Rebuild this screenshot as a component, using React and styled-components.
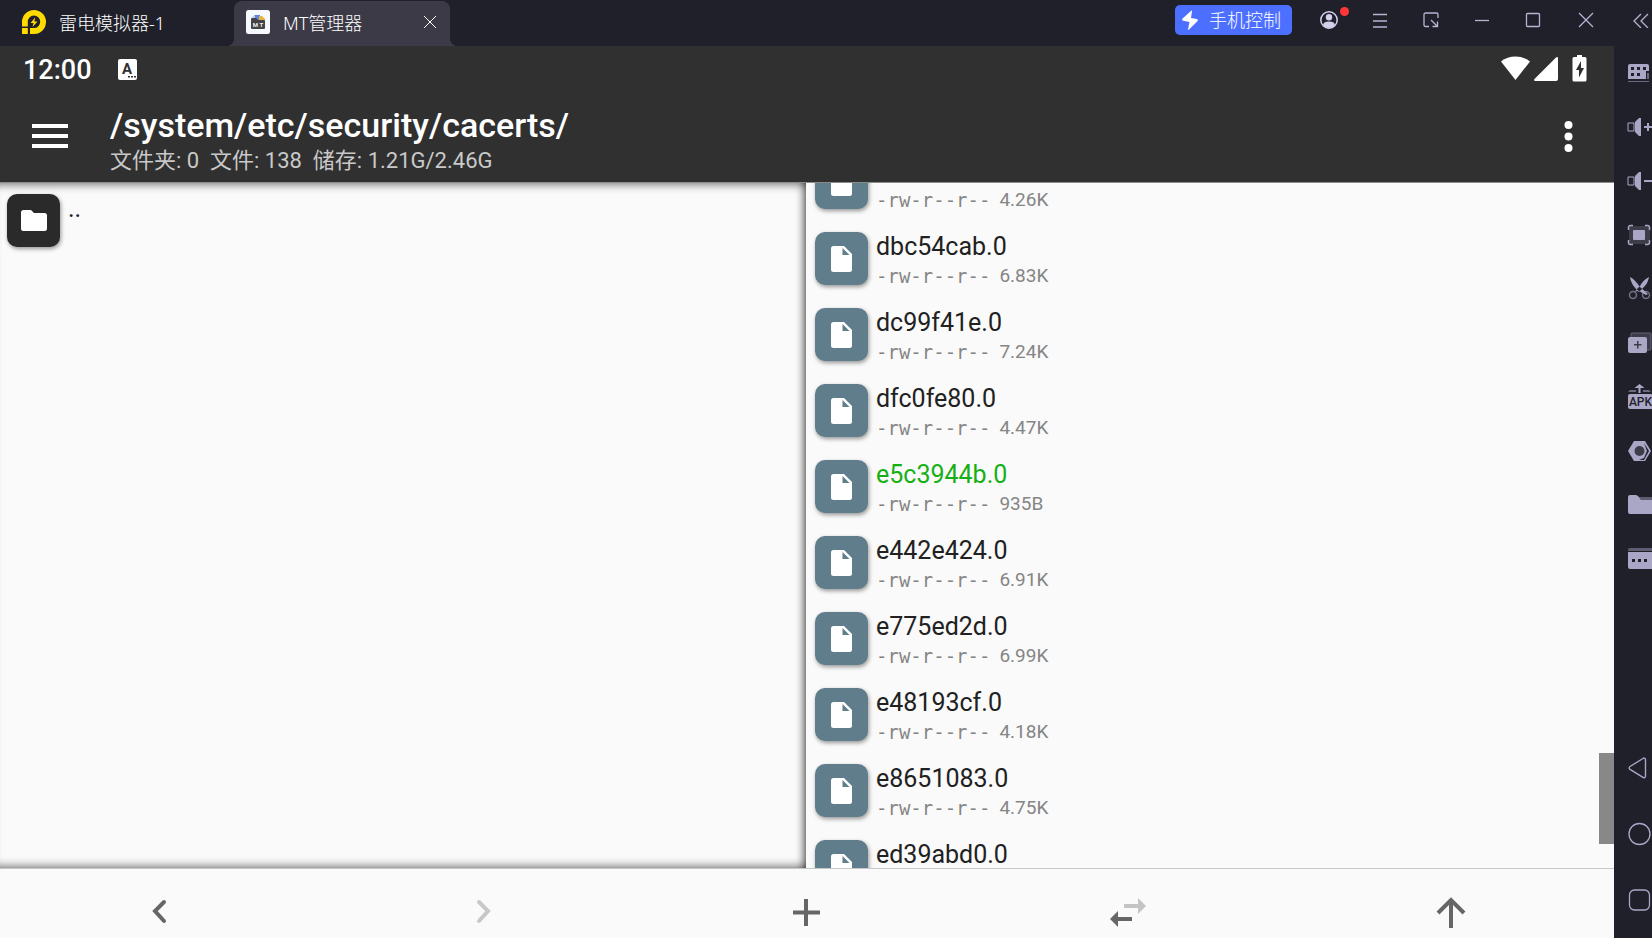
import React from "react";
import styled, { createGlobalStyle } from "styled-components";

const GlobalStyle = createGlobalStyle`
  * { box-sizing: border-box; }
  body { margin: 0; background: #fafafa; }
  button { border: 0; padding: 0; background: none; color: inherit; font: inherit; cursor: pointer; }
  h1, p, ul { margin: 0; padding: 0; }
  ul { list-style: none; }
  svg { display: block; flex: none; }
`;

const sans = `Roboto, "Noto Sans CJK SC", sans-serif`;
const uiSans = `"Noto Sans", "Noto Sans CJK SC", sans-serif`;

const Emulator = styled.div`
  display: flex;
  flex-direction: column;
  height: 100vh;
  overflow: hidden;
  font-family: ${sans};
`;

const TitleBar = styled.header`
  display: flex;
  flex: none;
  height: 46px;
  background: #20202a;
  color: #ffffff;
  font-family: ${uiSans};
  font-size: 18px;
  font-weight: 300;
  line-height: 24px;
`;

const InstanceTab = styled.div`
  display: flex;
  align-items: center;
  gap: 13px;
  width: 234px;
  padding: 0 0 2px 22px;
`;

const AppTab = styled.div`
  position: relative;
  display: flex;
  align-items: center;
  gap: 13px;
  width: 216px;
  margin-top: 1px;
  padding: 0 13px 3px 12px;
  border-radius: 8px 8px 0 0;
  background: #3c3a46;

  &::before,
  &::after {
    content: "";
    position: absolute;
    bottom: 0;
    width: 8px;
    height: 8px;
  }
  &::before {
    right: 100%;
    background: radial-gradient(circle at 0 0, transparent 8px, #3c3a46 8px);
  }
  &::after {
    left: 100%;
    background: radial-gradient(circle at 100% 0, transparent 8px, #3c3a46 8px);
  }
`;

const TabLabel = styled.span`
  flex: 1;
  padding-top: 2px;
  white-space: nowrap;
`;

const PhoneControl = styled.button`
  display: flex;
  align-items: center;
  gap: 11px;
  height: 30px;
  margin: 5px 11px 0 auto;
  padding: 0 11px 0 7px;
  border-radius: 5px;
  background: #4d6fff;
  white-space: nowrap;
`;

const WindowButton = styled.button`
  position: relative;
  display: grid;
  place-items: center;
  width: ${(p) => p.$width || 51}px;
  height: 40px;
  color: #b7b3d4;
`;

const Badge = styled.span`
  position: absolute;
  top: 7px;
  right: 5px;
  width: 9px;
  height: 9px;
  border-radius: 50%;
  background: #ff3638;
`;

const RailSlot = styled.div`
  width: 38px;
  overflow: hidden;
`;

const Body = styled.div`
  display: flex;
  flex: 1;
  min-height: 0;
`;

const Screen = styled.main`
  display: flex;
  flex: 1;
  flex-direction: column;
  min-width: 0;
  background: #fafafa;
`;

const StatusBar = styled.div`
  display: flex;
  align-items: center;
  height: 44px;
  padding: 2px 27px 0 23px;
  background: #303030;
  color: #ffffff;
`;

const Clock = styled.time`
  margin-right: 26px;
  padding-top: 2px;
  font-size: 27px;
  font-weight: 500;
  line-height: 32px;
`;

const StatusIcons = styled.div`
  display: flex;
  align-items: center;
  margin-left: auto;
`;

const AppBar = styled.div`
  display: flex;
  align-items: center;
  height: 93px;
  padding: 0 27px 0 32px;
  border-bottom: 1px solid #8c8c8c;
  background: #303030;
  color: #ffffff;
`;

const Heading = styled.div`
  flex: 1;
  min-width: 0;
  padding: 10px 0 0 42px;
  white-space: nowrap;
`;

const Path = styled.h1`
  font-size: 34px;
  font-weight: 500;
  line-height: 40px;
`;

const Summary = styled.p`
  color: #c9c9c9;
  font-size: 22px;
  line-height: 32px;
  white-space: pre;
`;

const Panes = styled.div`
  display: flex;
  flex: 1;
  min-height: 0;
`;

const Pane = styled.section`
  position: relative;
  flex: ${(p) => (p.$sunken ? "0 0 calc(50% - 1px)" : "1")};
  min-width: 0;
  overflow: hidden;
  box-shadow: ${(p) =>
    p.$sunken
      ? `inset 0 10px 8px -8px rgba(0,0,0,.5), inset -10px 0 8px -8px rgba(0,0,0,.7), inset 0 -10px 8px -8px rgba(0,0,0,.5)`
      : "none"};
`;

const FileList = styled.ul`
  margin-top: ${(p) => (p.$scrolled ? -38 : 0)}px;
  padding-left: ${(p) => (p.$scrolled ? 9 : 7)}px;
`;

const FileRow = styled.li`
  display: flex;
  gap: 8px;
  height: 76px;
  padding-top: 11px;
`;

const FileTile = styled.span`
  display: grid;
  flex: none;
  place-items: center;
  width: 53px;
  height: 53px;
  border-radius: 10px;
  background: ${(p) => (p.$folder ? "#2a2a2a" : "#607d8b")};
  box-shadow: 1px 2px 4px rgba(0, 0, 0, 0.4);
`;

const FileName = styled.div`
  height: 30px;
  color: ${(p) => (p.$fresh ? "#16b016" : "#212121")};
  font-size: 25px;
  line-height: 30px;
`;

const FileMeta = styled.div`
  display: flex;
  gap: 9px;
  color: #858585;
  font-size: 19px;
  line-height: 28px;
`;

const Mode = styled.span`
  font-family: "DejaVu Sans Mono", monospace;
`;

const ScrollThumb = styled.div`
  position: absolute;
  right: 0;
  bottom: 24px;
  width: 15px;
  height: 91px;
  background: #888888;
`;

const Toolbar = styled.nav`
  display: flex;
  flex: none;
  height: 70px;
  padding: 18px 2px 0 0;
  border-top: 1px solid #c8c8c8;
  color: #666666;
`;

const ToolButton = styled.button`
  display: flex;
  flex: 1;
  justify-content: center;
  color: ${(p) => (p.disabled ? "#c8c8c8" : "#666666")};
`;

const Rail = styled.aside`
  display: flex;
  flex-direction: column;
  justify-content: space-between;
  width: 38px;
  padding-bottom: 5px;
  overflow: hidden;
  background: #20202a;
`;

const RailButton = styled.button`
  display: grid;
  place-items: center;
  width: 51px;
  height: ${(p) => (p.$nav ? 66 : 54)}px;
  color: #aaa7c6;
`;

const LdLogo = () => (
  <svg width="24" height="24" viewBox="0 0 24 24" fill="#ffdb00" aria-hidden="true">
    <path fillRule="evenodd" d="M12 0a12 12 0 1 1 0 24H8v-6h4a6.200 6.200 0 1 0-6.200-6v4.600H0V12A12 12 0 0 1 12 0z" />
    <path d="M0 18h5.800v6H0zM13.200 7.500 8.500 13h3l-1 4 5-5.600h-3.100z" />
  </svg>
);

const MtLogo = () => (
  <svg width="24" height="24" viewBox="0 0 24 24" aria-hidden="true">
    <rect width="24" height="24" rx="2.500" fill="#f8f8ff" />
    <path d="M8 5h6v5H8z" fill="#5b84ec" />
    <path d="M6 7l3-2v4H6z" fill="#c3cde5" />
    <path d="M13 6h3l3 3v2h-6z" fill="#eab43a" />
    <path d="M6 8h4l2 2h6a1 1 0 0 1 1 1v7a1 1 0 0 1-1 1H6a1 1 0 0 1-1-1V9a1 1 0 0 1 1-1z" fill="#444446" />
    <text x="12" y="16.500" fontFamily="Roboto, sans-serif" fontSize="6" fontWeight="700" textAnchor="middle" fill="#f2f2f2">M T</text>
  </svg>
);

const stroke = { fill: "none", stroke: "currentColor", strokeWidth: 1.3 };

const Glyph = ({ name }) => {
  switch (name) {
    case "close-tab":
      return <svg width="14" height="14" viewBox="0 0 14 14" {...stroke} strokeWidth="1"><path d="M1 1l12 12M13 1 1 13" /></svg>;
    case "bolt":
      return <svg width="16" height="20" viewBox="0 0 16 20" fill="#fff"><path d="M9.500.5 .6 8.600c-.8.8-.5 2 .6 2.200l6.300 1.200-1.500 7.500c0 .5.4.6.7.3l8.700-8.600c.8-.8.5-1.900-.6-2.200L9 8l1-7c0-.6-.2-.7-.5-.5z" /></svg>;
    case "user":
      return <svg width="18" height="18" viewBox="0 0 18 18"><circle cx="9" cy="9" r="8.200" fill="none" stroke="#d3d0ec" strokeWidth="1.500" /><circle cx="9" cy="6.200" r="3.200" fill="#d3d0ec" /><path d="M3 14c.3-2.600 2.600-3.600 6-3.600s5.700 1 6 3.600c-1.500 2-3.600 3-6 3s-4.500-1-6-3z" fill="#d3d0ec" /></svg>;
    case "menu":
      return <svg width="16" height="16" viewBox="0 0 16 16" {...stroke}><path d="M1 2.500h14M1 9h14M1 15h14" /></svg>;
    case "resize":
      return <svg width="16" height="16" viewBox="0 0 16 16" {...stroke}><path d="M6 14.500H2.500a1.500 1.500 0 0 1-1.500-1.500V2.500A1.500 1.500 0 0 1 2.500 1h11A1.500 1.500 0 0 1 15 2.500V6M8 8l6.500 6.500M9.500 14.500h5v-5" /></svg>;
    case "minimize":
      return <svg width="16" height="16" viewBox="0 0 16 16" {...stroke}><path d="M1 8.500h14" /></svg>;
    case "maximize":
      return <svg width="16" height="16" viewBox="0 0 16 16" {...stroke}><rect x="1.500" y="1.500" width="13" height="13" rx="1" /></svg>;
    case "close":
      return <svg width="16" height="16" viewBox="0 0 16 16" {...stroke}><path d="M1 1l14 14M15 1 1 15" /></svg>;
    case "collapse":
      return <svg width="16" height="16" viewBox="0 0 16 16" {...stroke}><path d="M8 2 1 9l7 7M15 2 8 9l7 7" /></svg>;
    default:
      return null;
  }
};

const RailGlyph = ({ name }) => {
  const art = {
    keyboard: (
      <>
        <path fillRule="evenodd" d="M3 3h17a2 2 0 0 1 2 2v5h-3v8H1V5a2 2 0 0 1 2-2zM4 6v3h3V6zm6 0v3h3V6zm6 0v3h3V6zM4 12v3h3v-3zm6 0v3h3v-3z" />
        <path d="M20 12h2v6h-2zM1 20h21v1H1z" opacity=".55" />
      </>
    ),
    volumeUp: (
      <>
        <path d="M1 8h6v8H1z" fill="none" stroke="currentColor" />
        <path d="M8 7l4-4h2v18h-2l-4-4zM20 8h2v3h3v2h-3v3h-2v-3h-3v-2h3z" />
      </>
    ),
    volumeDown: (
      <>
        <path d="M1 8h6v8H1z" fill="none" stroke="currentColor" />
        <path d="M8 7l4-4h2v18h-2l-4-4zM17 11h8v2h-8z" />
      </>
    ),
    fullscreen: (
      <>
        <rect x="2" y="3" width="21" height="18" rx="2" fill="#3d3c49" />
        <path d="M6 2.500H3.500a2 2 0 0 0-2 2V7M18 2.500h2.500a2 2 0 0 1 2 2V7M1.500 17v2.500a2 2 0 0 0 2 2H6M18 21.500h2.500a2 2 0 0 0 2-2V17" fill="none" stroke="currentColor" strokeWidth="1.500" />
        <rect x="6" y="7" width="12" height="10" rx="1" />
      </>
    ),
    scissors: (
      <>
        <path d="M3 0c4 2 7 6 10 10l8 7-2 1-7-4C7 11 4 6 3 0zM22 0c-4 2-7 5-9 9l-4 4 3 2 3-3c3-3 6-6 7-12z" />
        <g fill="none" stroke="currentColor" strokeWidth="1.500" opacity=".6">
          <circle cx="6" cy="18" r="3.500" />
          <circle cx="19" cy="18" r="3.500" />
          <path d="M8 15l2-2M17 15l-2-2" />
        </g>
      </>
    ),
    multi: (
      <>
        <rect x="4" y="2" width="20" height="17" rx="1" fill="#3d3c49" stroke="#65637a" />
        <path fillRule="evenodd" d="M3 6h15a2 2 0 0 1 2 2v12a2 2 0 0 1-2 2H3a2 2 0 0 1-2-2V8a2 2 0 0 1 2-2zm7 4v3H7v1.500h3v3h1.500v-3h3V13h-3v-3z" />
      </>
    ),
    apk: (
      <>
        <path d="M12.500-1l5 4h-4v5h-2V3h-4z" />
        <path d="M3 5h6v2H1zM16 5h6l2 2h-8z" opacity=".55" />
        <rect x="1" y="9" width="25" height="15" rx="2" />
        <text x="13.500" y="21" fontFamily="Roboto, sans-serif" fontSize="12" fontWeight="500" textAnchor="middle" fill="#20202a">APK</text>
      </>
    ),
    hex: (
      <>
        <path d="M7 2h11l6 10-6 10H7L1 12z" />
        <path d="M17 4l3 8-3 7-5 2h5l5-9z" fill="#20202a" />
        <circle cx="12.500" cy="12" r="5" fill="#3d3c49" />
      </>
    ),
    folder: (
      <>
        <path d="M11 4h15v3H14z" opacity=".45" />
        <path d="M3 2h6l2 1 3 4h12v14H3a2 2 0 0 1-2-2V4a2 2 0 0 1 2-2z" />
      </>
    ),
    more: (
      <>
        <path d="M3 1h23v3H1V3a2 2 0 0 1 2-2z" opacity=".45" />
        <path fillRule="evenodd" d="M1 5h25v17H3a2 2 0 0 1-2-2zm4 7v3h3v-3zm6 0v3h3v-3zm6 0v3h3v-3z" />
      </>
    ),
    back: <path d="M16 2.500 3 10.500a1.600 1.600 0 0 0 0 2.800l13 8a1.500 1.500 0 0 0 2.500-1.300V3.800A1.500 1.500 0 0 0 16 2.500z" fill="none" stroke="currentColor" strokeWidth="1.400" />,
    home: <circle cx="12.500" cy="12" r="10.500" fill="none" stroke="currentColor" strokeWidth="1.300" />,
    recent: <rect x="2.500" y="2" width="20" height="20" rx="5" fill="none" stroke="currentColor" strokeWidth="1.300" />,
  };
  return (
    <svg width="25" height="24" viewBox="0 0 25 24" fill="currentColor" overflow="visible">
      {art[name]}
    </svg>
  );
};

const ToolGlyph = ({ name }) => {
  const line = { fill: "none", stroke: "currentColor", strokeWidth: 4 };
  const art = {
    back: <path d="M27 15 18 24l9 10" {...line} strokeLinecap="round" />,
    forward: <path d="M19 15l9 9-9 10" {...line} strokeLinecap="round" />,
    add: <path d="M24 12v27M11 25.500h27" {...line} />,
    swap: (
      <>
        <path d="M14 24 6 32l8 8v-6h14v-4H14z" />
        <path d="M42 19l-8-8v6H20v4h14v6z" fill="#c4c4c4" />
      </>
    ),
    up: <path d="M24 41V13M11 26l13-13 13 13" {...line} />,
  };
  return (
    <svg width="48" height="48" viewBox="0 0 48 48" fill="currentColor">
      {art[name]}
    </svg>
  );
};

const FileGlyph = () => (
  <svg width="21" height="26" viewBox="0 0 21 26" fill="#fff">
    <path fillRule="evenodd" d="M2.500 0H13l8 8v15.500a2.500 2.500 0 0 1-2.500 2.500h-16A2.500 2.500 0 0 1 0 23.500v-21A2.500 2.500 0 0 1 2.500 0zM11.500 2v7h7z" />
  </svg>
);

const FolderGlyph = () => (
  <svg width="26" height="22" viewBox="0 0 26 22" fill="#fff">
    <path d="M2.500 0H10l3 3h10.500A2.500 2.500 0 0 1 26 5.500v13a2.500 2.500 0 0 1-2.500 2.500h-21A2.500 2.500 0 0 1 0 18.500v-16A2.500 2.500 0 0 1 2.500 0z" />
  </svg>
);

const files = [
  { name: "", size: "4.26K" },
  { name: "dbc54cab.0", size: "6.83K" },
  { name: "dc99f41e.0", size: "7.24K" },
  { name: "dfc0fe80.0", size: "4.47K" },
  { name: "e5c3944b.0", size: "935B", fresh: true },
  { name: "e442e424.0", size: "6.91K" },
  { name: "e775ed2d.0", size: "6.99K" },
  { name: "e48193cf.0", size: "4.18K" },
  { name: "e8651083.0", size: "4.75K" },
  { name: "ed39abd0.0", size: "" },
];

const railTools = [
  ["keyboard", "键盘"],
  ["volumeUp", "音量加"],
  ["volumeDown", "音量减"],
  ["fullscreen", "全屏"],
  ["scissors", "截图"],
  ["multi", "多开"],
  ["apk", "安装APK"],
  ["hex", "设置"],
  ["folder", "共享文件夹"],
  ["more", "更多"],
];

const railNav = [
  ["back", "返回"],
  ["home", "主页"],
  ["recent", "最近任务"],
];

const windowButtons = [
  ["menu", "菜单"],
  ["resize", "缩放"],
  ["minimize", "最小化"],
  ["maximize", "最大化"],
];

export default function App() {
  return (
    <Emulator>
      <GlobalStyle />
      <TitleBar>
        <InstanceTab>
          <LdLogo />
          <TabLabel>雷电模拟器-1</TabLabel>
        </InstanceTab>
        <AppTab>
          <MtLogo />
          <TabLabel>MT管理器</TabLabel>
          <button type="button" aria-label="关闭标签">
            <Glyph name="close-tab" />
          </button>
        </AppTab>
        <PhoneControl type="button">
          <Glyph name="bolt" />
          手机控制
        </PhoneControl>
        <WindowButton type="button" aria-label="账户">
          <Glyph name="user" />
          <Badge />
        </WindowButton>
        {windowButtons.map(([name, label]) => (
          <WindowButton key={name} type="button" aria-label={label}>
            <Glyph name={name} />
          </WindowButton>
        ))}
        <WindowButton type="button" aria-label="关闭" $width={56}>
          <Glyph name="close" />
        </WindowButton>
        <RailSlot>
          <WindowButton type="button" aria-label="收起" $width={53}>
            <Glyph name="collapse" />
          </WindowButton>
        </RailSlot>
      </TitleBar>

      <Body>
        <Screen>
          <StatusBar>
            <Clock>12:00</Clock>
            <svg width="19" height="21" viewBox="0 0 19 21" aria-hidden="true">
              <rect width="19" height="21" rx="2" fill="#fff" />
              <text x="9" y="15" fontFamily="Roboto, sans-serif" fontSize="15" fontWeight="700" textAnchor="middle" fill="#303030">A</text>
              <path d="M10 17h2v1.500h-2zM13 17h2v1.500h-2zM16 17h2v1.500h-2z" fill="#303030" />
            </svg>
            <StatusIcons>
              <svg width="86" height="28" viewBox="0 1 86 28" fill="#fff" aria-hidden="true">
                <path d="M0 7.500C8 .7 21 .7 29 7.500L14.500 26z" />
                <path d="M57 4.500V25a2 2 0 0 1-2 2H34.500c-1.500 0-2-1-1-2L55 3.500c1-1 2-.5 2 1z" />
                <path fillRule="evenodd" d="M76 1h5v2h3a1.500 1.500 0 0 1 1.500 1.500V26a1.500 1.500 0 0 1-1.500 1.500H73a1.500 1.500 0 0 1-1.500-1.500V4.500A1.500 1.500 0 0 1 73 3h3zM80 7l-5 9h3v7.500l5-9.500h-3z" />
              </svg>
            </StatusIcons>
          </StatusBar>

          <AppBar>
            <button type="button" aria-label="打开菜单">
              <svg width="36" height="26" viewBox="0 0 36 26" fill="#fff">
                <path d="M0 1h36v4H0zM0 11h36v4H0zM0 21h36v4H0z" />
              </svg>
            </button>
            <Heading>
              <Path>/system/etc/security/cacerts/</Path>
              <Summary>{"文件夹: 0  文件: 138  储存: 1.21G/2.46G"}</Summary>
            </Heading>
            <button type="button" aria-label="更多选项">
              <svg width="37" height="34" viewBox="0 0 37 34" fill="#fff">
                <circle cx="18.500" cy="6" r="4" />
                <circle cx="18.500" cy="17.500" r="4" />
                <circle cx="18.500" cy="29" r="4" />
              </svg>
            </button>
          </AppBar>

          <Panes>
            <Pane $sunken>
              <FileList>
                <FileRow>
                  <FileTile $folder>
                    <FolderGlyph />
                  </FileTile>
                  <FileName>..</FileName>
                </FileRow>
              </FileList>
            </Pane>
            <Pane>
              <FileList $scrolled>
                {files.map((file) => (
                  <FileRow key={file.name}>
                    <FileTile>
                      <FileGlyph />
                    </FileTile>
                    <div>
                      <FileName $fresh={file.fresh}>{file.name}</FileName>
                      {file.size && (
                        <FileMeta>
                          <Mode>-rw-r--r--</Mode>
                          <span>{file.size}</span>
                        </FileMeta>
                      )}
                    </div>
                  </FileRow>
                ))}
              </FileList>
              <ScrollThumb />
            </Pane>
          </Panes>

          <Toolbar>
            <ToolButton type="button" aria-label="后退"><ToolGlyph name="back" /></ToolButton>
            <ToolButton type="button" aria-label="前进" disabled><ToolGlyph name="forward" /></ToolButton>
            <ToolButton type="button" aria-label="新建"><ToolGlyph name="add" /></ToolButton>
            <ToolButton type="button" aria-label="同步窗口"><ToolGlyph name="swap" /></ToolButton>
            <ToolButton type="button" aria-label="上级目录"><ToolGlyph name="up" /></ToolButton>
          </Toolbar>
        </Screen>

        <Rail>
          <div>
            {railTools.map(([name, label]) => (
              <RailButton key={name} type="button" aria-label={label}>
                <RailGlyph name={name} />
              </RailButton>
            ))}
          </div>
          <div>
            {railNav.map(([name, label]) => (
              <RailButton key={name} type="button" aria-label={label} $nav>
                <RailGlyph name={name} />
              </RailButton>
            ))}
          </div>
        </Rail>
      </Body>
    </Emulator>
  );
}
